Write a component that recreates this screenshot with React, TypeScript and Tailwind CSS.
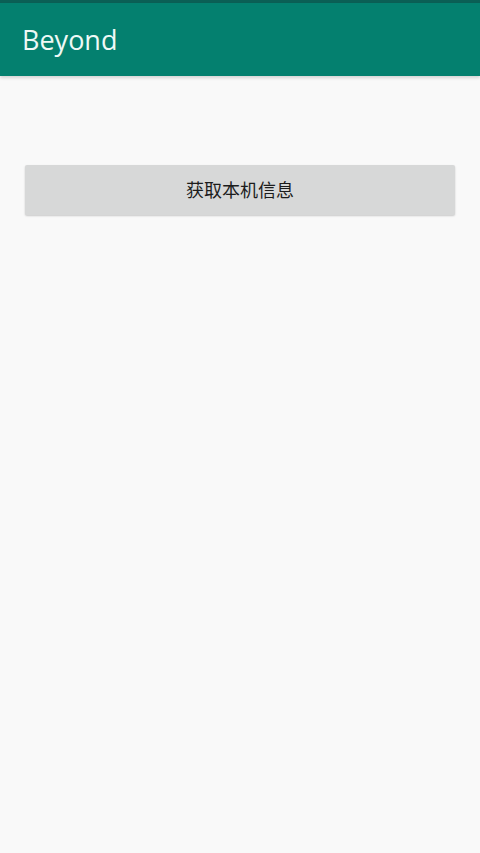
export default function App() {
  return (
    <div className="w-[480px] h-[853px] bg-[#f9f9f9] flex flex-col" style={{ fontFamily: '"Roboto", "Noto Sans CJK SC", sans-serif' }}>
      <div className="h-[3px] bg-[#0b5f55]" />
      <header className="h-[73px] bg-[#04806f] flex items-center px-[22px] shadow-[0_2px_3px_rgba(0,0,0,0.15)]">
        <h1 className="text-[27px] text-[#eef9f6] pt-[1px]" style={{ fontFamily: '"Open Sans", sans-serif' }}>Beyond</h1>
      </header>
      <div className="px-[25px] pt-[89px]">
        <button className="w-full h-[50px] bg-[#d7d8d8] rounded-[2px] shadow-[0_1px_2px_rgba(0,0,0,0.2)] text-[18px] text-[#1c1c1c] flex items-center justify-center">
          获取本机信息
        </button>
      </div>
    </div>
  );
}
